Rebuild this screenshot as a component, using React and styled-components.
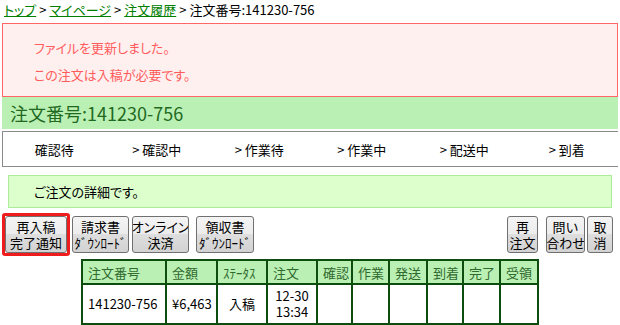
import React from 'react';
import styled, { createGlobalStyle } from 'styled-components';

const Global = createGlobalStyle`
  html, body { margin: 0; padding: 0; background: #fff; }
  body {
    font-family: "Noto Sans CJK JP", "Noto Sans", sans-serif;
    font-size: 13px;
    color: #000;
  }
`;

const Page = styled.div`
  width: 616px;
  margin-left: 2px;
`;

const Breadcrumb = styled.div`
  height: 23px;
  line-height: 20px;
  padding-left: 2px;
  white-space: nowrap;
`;

const Crumb = styled.a`
  color: #008000;
  text-decoration: underline;
  font-feature-settings: "palt";
`;

const Sep = styled.span`
  margin: 0 3px;
`;

const Alert = styled.div`
  box-sizing: border-box;
  height: 74px;
  border: 1px solid #ff6666;
  background: #fff0f0;
  color: #ff5c5c;
  padding: 10px 31px 0;
  line-height: 27px;
  font-feature-settings: "palt";
`;

const Heading = styled.h1`
  margin: 0;
  height: 32px;
  line-height: 32px;
  background: #bbf0b4;
  color: #1f6a1f;
  font-size: 18px;
  font-weight: normal;
  padding-left: 8px;
`;

const Steps = styled.div`
  box-sizing: border-box;
  margin-top: 2px;
  height: 36px;
  border-top: 1px solid #8a8a8a;
  border-bottom: 1px solid #8a8a8a;
  border-left: 1px solid #8a8a8a;
  display: grid;
  grid-template-columns: repeat(6, 1fr);
  align-items: center;
  text-align: center;
`;

const Step = styled.div``;

const Info = styled.div`
  box-sizing: border-box;
  margin: 8px 6px 0;
  height: 33px;
  line-height: 31px;
  border: 1px solid #aaee99;
  background: #ddffcc;
  padding-left: 25px;
  font-feature-settings: "palt";
`;

const ButtonRow = styled.div`
  margin-top: 5px;
  height: 43px;
  display: flex;
  align-items: center;
`;

const Highlight = styled.div`
  border: 3px solid #ee1c1c;
  border-radius: 3px;
  display: flex;
`;

const Button = styled.button`
  box-sizing: border-box;
  width: ${p => p.$w}px;
  height: 37px;
  margin-left: ${p => p.$ml || 0}px;
  padding: 1px 0;
  border: 1px solid #707070;
  border-radius: 3px;
  background: linear-gradient(#f4f4f4 0%, #ececec 50%, #dedede 50%, #d2d2d2 100%);
  font-family: inherit;
  font-size: 13px;
  line-height: 16px;
  color: #000;
  text-align: center;
  white-space: nowrap;
  overflow: hidden;
  display: flex;
  flex-direction: column;
  align-items: center;
  justify-content: center;
`;

const Narrow = styled.span`
  font-feature-settings: "palt";
`;

const Spacer = styled.div`
  flex: 1;
`;

const EndGap = styled.div`
  width: 5px;
`;

const Table = styled.table`
  margin: 3px auto 0;
  width: 456px;
  table-layout: fixed;
  border-collapse: collapse;
  border: 2px solid #0d4d0d;
`;

const Th = styled.th`
  height: 22px;
  border: 2px solid #0d4d0d;
  background: #bbf0b4;
  color: #2f6a2f;
  font-weight: normal;
  text-align: left;
  padding: 0 0 0 5px;
  white-space: nowrap;
`;

const Td = styled.td`
  height: 38px;
  border: 2px solid #0d4d0d;
  text-align: ${p => (p.$center ? 'center' : 'left')};
  padding: 0 0 0 ${p => (p.$center ? 0 : 5)}px;
  line-height: 16px;
  white-space: nowrap;
`;

const cols = [84, 51, 50, 50, 35, 37, 38, 36, 37, 38];
const heads = ['注文番号', '金額', 'ｽﾃｰﾀｽ', '注文', '確認', '作業', '発送', '到着', '完了', '受領'];
const steps = ['確認待', '> 確認中', '> 作業待', '> 作業中', '> 配送中', '> 到着'];

export default function App() {
  return (
    <>
      <Global />
      <Page>
        <Breadcrumb>
          <Crumb>トップ</Crumb><Sep>&gt;</Sep>
          <Crumb>マイページ</Crumb><Sep>&gt;</Sep>
          <Crumb>注文履歴</Crumb><Sep>&gt;</Sep>
          <span>注文番号:141230-756</span>
        </Breadcrumb>
        <Alert>
          <div>ファイルを更新しました。</div>
          <div>この注文は入稿が必要です。</div>
        </Alert>
        <Heading>注文番号:141230-756</Heading>
        <Steps>
          {steps.map(s => <Step key={s}>{s}</Step>)}
        </Steps>
        <Info>ご注文の詳細です。</Info>
        <ButtonRow>
          <Highlight>
            <Button $w={62}><span>再入稿</span><span>完了通知</span></Button>
          </Highlight>
          <Button $w={57} $ml={2}><span>請求書</span><span>ﾀﾞｳﾝﾛｰﾄﾞ</span></Button>
          <Button $w={57} $ml={3}><Narrow>オンライン</Narrow><span>決済</span></Button>
          <Button $w={58} $ml={7}><span>領収書</span><span>ﾀﾞｳﾝﾛｰﾄﾞ</span></Button>
          <Spacer />
          <Button $w={31}><span>再</span><span>注文</span></Button>
          <Button $w={39} $ml={8}><span>問い</span><Narrow>合わせ</Narrow></Button>
          <Button $w={26} $ml={2}><span>取</span><span>消</span></Button>
          <EndGap />
        </ButtonRow>
        <Table>
          <colgroup>
            {cols.map((w, i) => <col key={i} style={{ width: w }} />)}
          </colgroup>
          <thead>
            <tr>{heads.map(h => <Th key={h}>{h}</Th>)}</tr>
          </thead>
          <tbody>
            <tr>
              <Td>141230-756</Td>
              <Td>¥6,463</Td>
              <Td $center>入稿</Td>
              <Td $center>12-30<br />13:34</Td>
              <Td /><Td /><Td /><Td /><Td /><Td />
            </tr>
          </tbody>
        </Table>
      </Page>
    </>
  );
}
